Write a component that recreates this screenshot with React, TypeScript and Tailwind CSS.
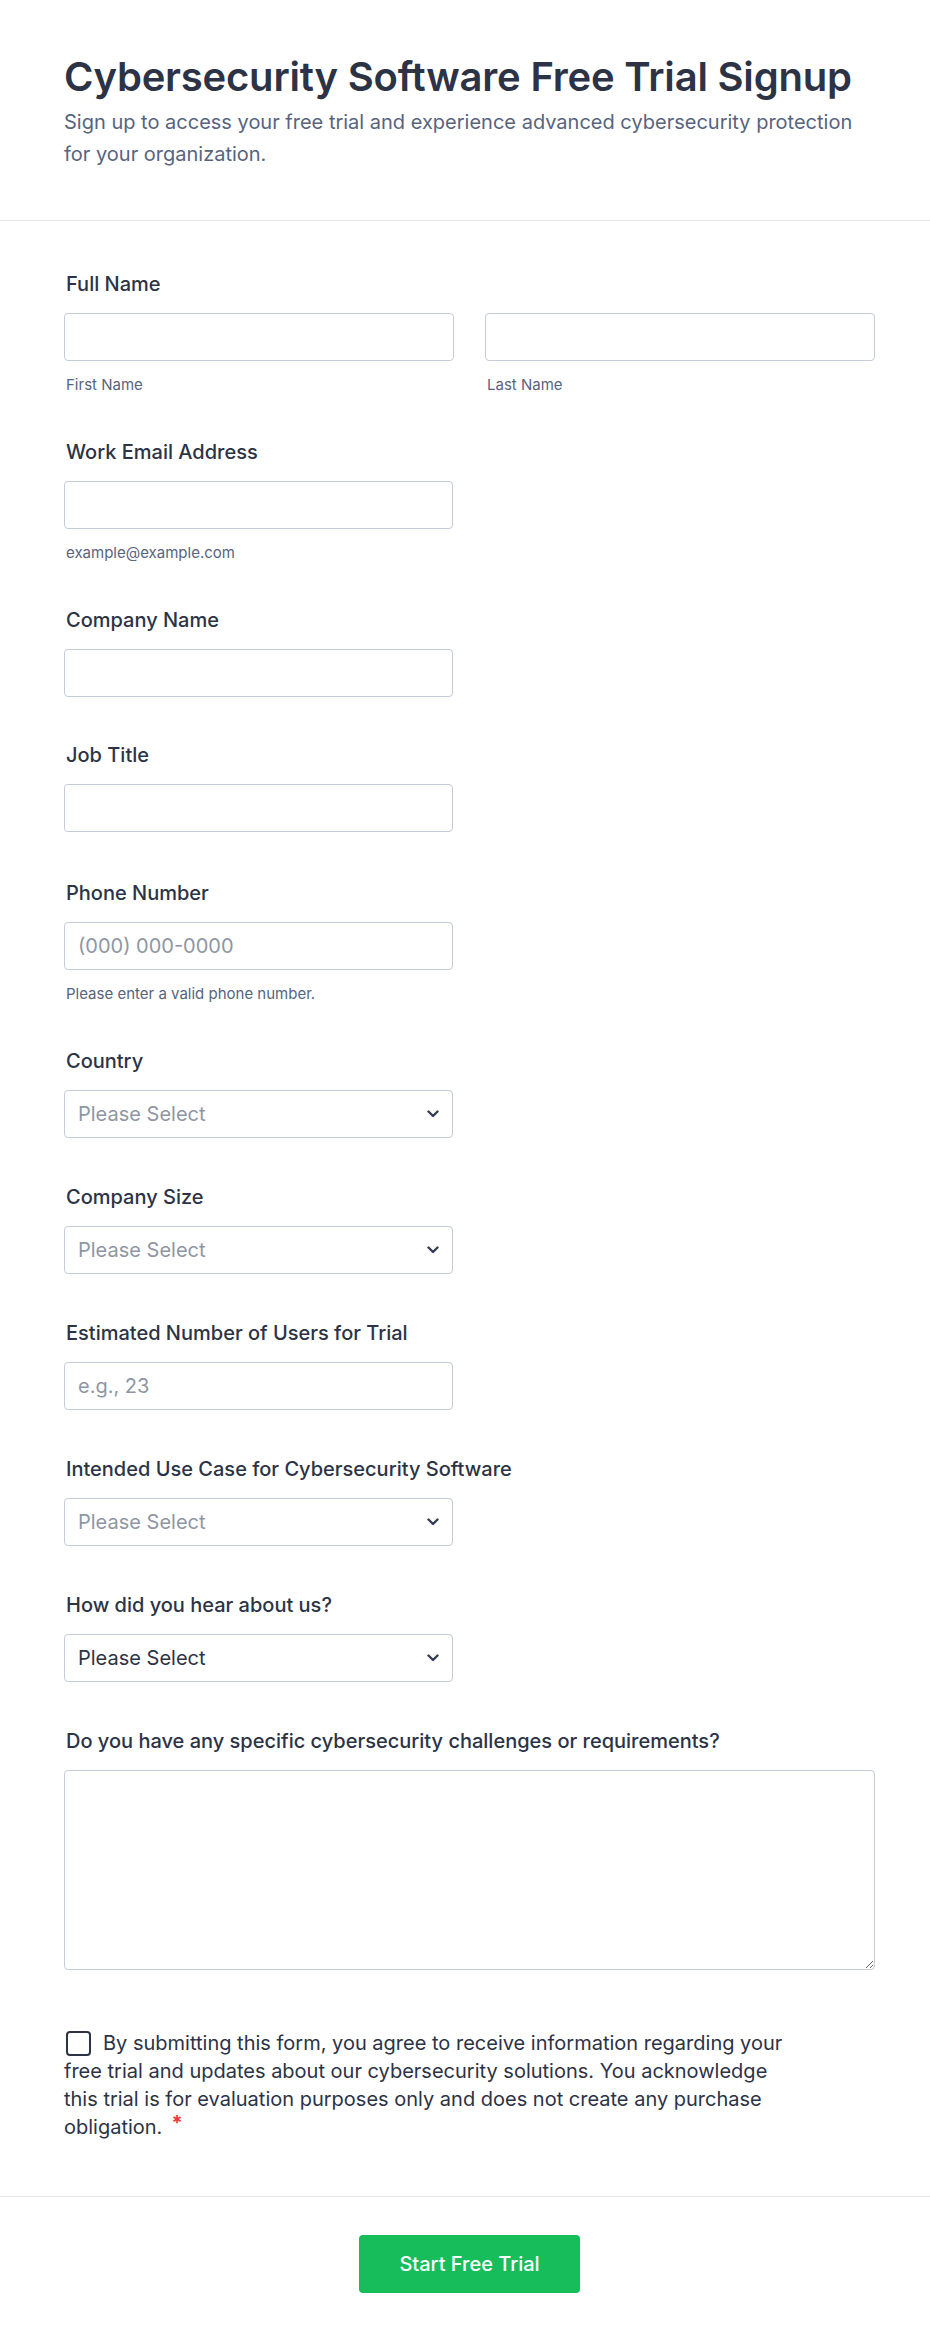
import React from "react";

const inputCls =
  "h-12 w-full rounded-[4px] border border-[#c3cad8] bg-white px-[13px] text-[20px] text-[#2c3345] placeholder:text-[#8f96a3] outline-none";

function Label({ children }: { children: React.ReactNode }) {
  return (
    <label className="block pl-[2px] text-[20px] font-medium leading-[26px] text-[#2c3345]">
      {children}
    </label>
  );
}

function Sub({ children }: { children: React.ReactNode }) {
  return <div className="mt-[15px] pl-[2px] text-[15px] leading-[18px] text-[#57647e]">{children}</div>;
}

function Chevron() {
  return (
    <svg
      className="pointer-events-none absolute right-[14px] top-1/2 -translate-y-1/2"
      width="12"
      height="8"
      viewBox="0 0 12 8"
      fill="none"
    >
      <path d="M1.5 1.5L6 6l4.5-4.5" stroke="#343f56" strokeWidth="2.4" strokeLinecap="round" strokeLinejoin="round" />
    </svg>
  );
}

function SelectField({ label, filled, className = "" }: { label: string; filled?: boolean; className?: string }) {
  return (
    <div className={className}>
      <Label>{label}</Label>
      <div className="relative mt-4 w-[389px]">
        <select
          defaultValue=""
          className={`${inputCls} appearance-none ${filled ? "text-[#2c3345]" : "text-[#8f96a3]"}`}
        >
          <option value="">Please Select</option>
        </select>
        <Chevron />
      </div>
    </div>
  );
}

function TextField({
  label,
  placeholder,
  sub,
  className = "",
}: {
  label: string;
  placeholder?: string;
  sub?: string;
  className?: string;
}) {
  return (
    <div className={className}>
      <Label>{label}</Label>
      <div className="mt-4 w-[389px]">
        <input type="text" placeholder={placeholder} className={inputCls} />
      </div>
      {sub && <Sub>{sub}</Sub>}
    </div>
  );
}

export default function App() {
  return (
    <div className="min-h-screen w-full bg-white [font-family:Inter,sans-serif]">
      <header className="border-b border-[#e3e5ea] px-16 pb-[50px] pt-[53px]">
        <h1 className="text-[40px] font-semibold leading-[48px] tracking-[-0.2px] text-[#2c3345]">
          Cybersecurity Software Free Trial Signup
        </h1>
        <p className="mt-[5px] max-w-[802px] text-[20px] leading-8 text-[#57647e]">
          Sign up to access your free trial and experience advanced cybersecurity protection for your
          organization.
        </p>
      </header>

      <form className="ml-16 flex w-[811px] flex-col pb-[55px] pt-[50px]">
        <div>
          <Label>Full Name</Label>
          <div className="mt-4 grid grid-cols-2 gap-[31px]">
            <div>
              <input type="text" className={inputCls} />
              <Sub>First Name</Sub>
            </div>
            <div>
              <input type="text" className={inputCls} />
              <Sub>Last Name</Sub>
            </div>
          </div>
        </div>

        <TextField className="mt-[45px]" label="Work Email Address" sub="example@example.com" />
        <TextField className="mt-[45px]" label="Company Name" />
        <TextField className="mt-[45px]" label="Job Title" />
        <TextField
          className="mt-[48px]"
          label="Phone Number"
          placeholder="(000) 000-0000"
          sub="Please enter a valid phone number."
        />
        <SelectField className="mt-[45px]" label="Country" />
        <SelectField className="mt-[46px]" label="Company Size" />
        <TextField className="mt-[46px]" label="Estimated Number of Users for Trial" placeholder="e.g., 23" />
        <SelectField className="mt-[46px]" label="Intended Use Case for Cybersecurity Software" />
        <SelectField className="mt-[46px]" label="How did you hear about us?" filled />

        <div className="mt-[46px]">
          <Label>Do you have any specific cybersecurity challenges or requirements?</Label>
          <textarea className="mt-4 block h-[200px] w-full rounded-[4px] border border-[#c3cad8] bg-white px-[13px] py-2 text-[20px] text-[#2c3345] outline-none" />
        </div>

        <div className="mt-[59px] w-[722px] text-[20px] leading-7 text-[#2c3345]">
          <span className="ml-[2px] mr-[12px] inline-block h-[25px] w-[25px] rounded-[4px] border-2 border-[#2c3345] align-[-6px]" />
          By submitting this form, you agree to receive information regarding your free trial and updates
          about our cybersecurity solutions. You acknowledge this trial is for evaluation purposes only and
          does not create any purchase obligation.
          <span className="ml-[9px] align-top text-[20px] font-bold leading-5 text-[#f23a3c]">*</span>
        </div>
      </form>

      <div className="border-t border-[#e3e5ea] pb-[50px] pt-[38px]">
        <div className="ml-16 flex w-[811px] justify-center">
          <button
            type="button"
            className="h-[58px] w-[221px] rounded-[4px] bg-[#18bd5b] text-[20px] font-medium text-white"
          >
            Start Free Trial
          </button>
        </div>
      </div>
    </div>
  );
}
